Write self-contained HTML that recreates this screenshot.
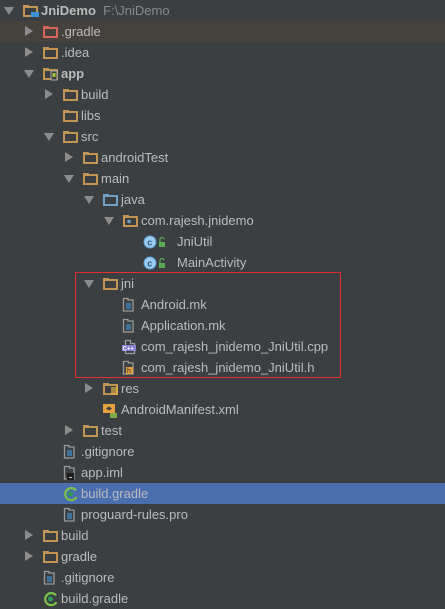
<!DOCTYPE html>
<html><head><meta charset="utf-8"><style>
body{margin:0;width:445px;height:608px;background:#3c3f41;overflow:hidden;font-family:"Liberation Sans",sans-serif;font-size:13px;color:#bbbbbb;position:relative}
.r{position:absolute;left:0;width:445px;height:21px}
.a{position:absolute;top:6px;width:0;height:0}
.ar{border-top:5px solid transparent;border-bottom:5px solid transparent;border-left:8px solid #8c8c8c;top:5px}
.ad{border-left:5px solid transparent;border-right:5px solid transparent;border-top:8px solid #8c8c8c;top:7px}
.i{position:absolute;top:3px;width:16px;height:16px}
.t{position:absolute;top:0;line-height:21px;white-space:nowrap}
.box{position:absolute;left:75px;top:272px;width:266px;height:106px;border:1px solid #e0302f;box-sizing:border-box}
</style></head><body>
<svg width="0" height="0" style="position:absolute"><defs>
<g id="fo"><rect x="1" y="4" width="13" height="9" fill="none" stroke="#c09553" stroke-width="2"/><rect x="0" y="2" width="6" height="2" fill="#c09553"/></g>
<g id="fr"><rect x="1" y="4" width="13" height="9" fill="none" stroke="#d9645c" stroke-width="2"/><rect x="0" y="2" width="6" height="2" fill="#d9645c"/></g>
<g id="fb"><rect x="1" y="4" width="13" height="9" fill="none" stroke="#6fa1c8" stroke-width="2"/><rect x="0" y="2" width="6" height="2" fill="#6fa1c8"/></g>
<g id="fl"><path d="M1.5 1.5h4.5v1.5h5v11h-9.5z" fill="none" stroke="#9a9a9a" stroke-width="1.3"/><path d="M4 7h5M4 9h5M4 11h5" stroke="#3f8fd0" stroke-width="1.2"/></g>
<g id="cl"><circle cx="7" cy="8" r="6" fill="#9ccdf0" stroke="#5ea0d6"/><text x="4.2" y="11.5" font-size="9" font-family="Liberation Sans" fill="#2c5a82" font-weight="bold">c</text><rect x="16" y="8" width="6" height="5" fill="#5aaa55"/><path d="M17 8v-2.5a2 2 0 0 1 4 0" fill="none" stroke="#5aaa55" stroke-width="1.2"/></g>
</defs></svg>

<div class="r" style="top:0"><div class="a ad" style="left:4px"></div><svg class="i" style="left:23px"><use href="#fo"/><rect x="8" y="9" width="8" height="5" fill="#3a8fd6"/></svg><span class="t" style="left:41px"><b>JniDemo</b>&nbsp; <span style="color:#8a8a8a">F:\JniDemo</span></span></div>
<div class="r" style="top:21px;background:#45423d"><div class="a ar" style="left:25px"></div><svg class="i" style="left:43px"><use href="#fr"/></svg><span class="t" style="left:61px">.gradle</span></div>
<div class="r" style="top:42px"><div class="a ar" style="left:25px"></div><svg class="i" style="left:43px"><use href="#fo"/></svg><span class="t" style="left:61px">.idea</span></div>
<div class="r" style="top:63px"><div class="a ad" style="left:24px"></div><svg class="i" style="left:43px"><use href="#fo"/><rect x="8" y="5" width="6" height="9" fill="#3c3f41" stroke="#aaa"/><rect x="9.5" y="7" width="3" height="4" fill="#a4c639"/></svg><span class="t" style="left:61px"><b>app</b></span></div>
<div class="r" style="top:84px"><div class="a ar" style="left:45px"></div><svg class="i" style="left:63px"><use href="#fo"/></svg><span class="t" style="left:81px">build</span></div>
<div class="r" style="top:105px"><svg class="i" style="left:63px"><use href="#fo"/></svg><span class="t" style="left:81px">libs</span></div>
<div class="r" style="top:126px"><div class="a ad" style="left:44px"></div><svg class="i" style="left:63px"><use href="#fo"/></svg><span class="t" style="left:81px">src</span></div>
<div class="r" style="top:147px"><div class="a ar" style="left:65px"></div><svg class="i" style="left:83px"><use href="#fo"/></svg><span class="t" style="left:101px">androidTest</span></div>
<div class="r" style="top:168px"><div class="a ad" style="left:64px"></div><svg class="i" style="left:83px"><use href="#fo"/></svg><span class="t" style="left:101px">main</span></div>
<div class="r" style="top:189px"><div class="a ad" style="left:84px"></div><svg class="i" style="left:103px"><use href="#fb"/></svg><span class="t" style="left:121px">java</span></div>
<div class="r" style="top:210px"><div class="a ad" style="left:104px"></div><svg class="i" style="left:123px"><use href="#fo"/><circle cx="6" cy="8.5" r="1.8" fill="#6fa1c8"/></svg><span class="t" style="left:141px">com.rajesh.jnidemo</span></div>
<div class="r" style="top:231px"><svg class="i" style="left:143px;width:24px"><use href="#cl"/></svg><span class="t" style="left:177px">JniUtil</span></div>
<div class="r" style="top:252px"><svg class="i" style="left:143px;width:24px"><use href="#cl"/></svg><span class="t" style="left:177px">MainActivity</span></div>
<div class="r" style="top:273px"><div class="a ad" style="left:84px"></div><svg class="i" style="left:103px"><use href="#fo"/></svg><span class="t" style="left:121px">jni</span></div>
<div class="r" style="top:294px"><svg class="i" style="left:122px"><use href="#fl"/></svg><span class="t" style="left:141px">Android.mk</span></div>
<div class="r" style="top:315px"><svg class="i" style="left:122px"><use href="#fl"/></svg><span class="t" style="left:141px">Application.mk</span></div>
<div class="r" style="top:336px"><svg class="i" style="left:122px"><path d="M3.5 1.5h5v3h4v10h-9z" fill="none" stroke="#9a9a9a" stroke-width="1.3"/><rect x="0" y="6" width="14" height="6" fill="#8a7fd4"/><text x="0.5" y="11.5" font-size="6" fill="#fff" font-family="Liberation Sans" font-weight="bold">C++</text></svg><span class="t" style="left:141px">com_rajesh_jnidemo_JniUtil.cpp</span></div>
<div class="r" style="top:357px"><svg class="i" style="left:122px"><path d="M1.5 1.5h5v1.5h4.5v11h-9.5z" fill="none" stroke="#9a9a9a" stroke-width="1.3"/><rect x="4" y="7" width="7" height="7" fill="#e2a03f"/><text x="5" y="13" font-size="7" fill="#333" font-family="Liberation Sans">h</text></svg><span class="t" style="left:141px">com_rajesh_jnidemo_JniUtil.h</span></div>
<div class="r" style="top:378px"><div class="a ar" style="left:85px"></div><svg class="i" style="left:103px"><use href="#fo"/><path d="M8 7h7M8 9h7M8 11h7M8 13h7" stroke="#e2b240" stroke-width="1.2"/></svg><span class="t" style="left:121px">res</span></div>
<div class="r" style="top:399px"><svg class="i" style="left:102px"><rect x="1" y="2" width="12" height="9" fill="#e2a03f"/><path d="M4 6.5l3-2 3 2-3 2z" fill="#3c3f41"/><rect x="8" y="11" width="7" height="5" fill="#7dac4a"/></svg><span class="t" style="left:121px">AndroidManifest.xml</span></div>
<div class="r" style="top:420px"><div class="a ar" style="left:65px"></div><svg class="i" style="left:83px"><use href="#fo"/></svg><span class="t" style="left:101px">test</span></div>
<div class="r" style="top:441px"><svg class="i" style="left:63px"><use href="#fl"/></svg><span class="t" style="left:81px">.gitignore</span></div>
<div class="r" style="top:462px"><svg class="i" style="left:63px"><path d="M1.5 1.5h5v1.5h4.5v11h-9.5z" fill="none" stroke="#9a9a9a" stroke-width="1.3"/><rect x="4" y="8" width="7" height="7" fill="#1e1e1e"/><rect x="6" y="12" width="3" height="1" fill="#ccc"/></svg><span class="t" style="left:81px">app.iml</span></div>
<div class="r" style="top:483px;background:#4b6eaf"><svg class="i" style="left:63px"><path d="M13 4.5A6 6 0 1 0 13.5 11" fill="none" stroke="#7cc24a" stroke-width="2.2"/><circle cx="7.5" cy="8" r="2.5" fill="#2a9d56"/></svg><span class="t" style="left:81px">build.gradle</span></div>
<div class="r" style="top:504px"><svg class="i" style="left:63px"><use href="#fl"/></svg><span class="t" style="left:81px">proguard-rules.pro</span></div>
<div class="r" style="top:525px"><div class="a ar" style="left:25px"></div><svg class="i" style="left:43px"><use href="#fo"/></svg><span class="t" style="left:61px">build</span></div>
<div class="r" style="top:546px"><div class="a ar" style="left:25px"></div><svg class="i" style="left:43px"><use href="#fo"/></svg><span class="t" style="left:61px">gradle</span></div>
<div class="r" style="top:567px"><svg class="i" style="left:43px"><use href="#fl"/></svg><span class="t" style="left:61px">.gitignore</span></div>
<div class="r" style="top:588px"><svg class="i" style="left:43px"><path d="M13 4.5A6 6 0 1 0 13.5 11" fill="none" stroke="#7cc24a" stroke-width="2.2"/><circle cx="7.5" cy="8" r="2.5" fill="#2a9d56"/></svg><span class="t" style="left:61px">build.gradle</span></div>
<div class="box"></div>
</body></html>
